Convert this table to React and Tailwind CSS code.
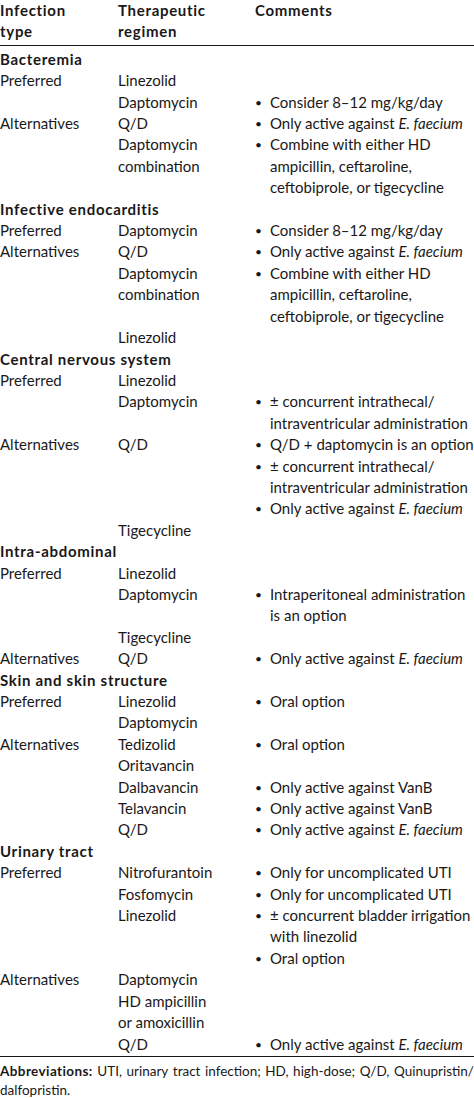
import React from "react";

const EF = () => (
  <>
    Only active against <i>E. faecium</i>
  </>
);

const sections = [
  {
    title: "Bacteremia",
    rows: [
      ["Preferred", ["Linezolid"], []],
      ["", ["Daptomycin"], [["Consider 8–12 mg/kg/day"]]],
      ["Alternatives", ["Q/D"], [[<EF />]]],
      [
        "",
        ["Daptomycin", "combination"],
        [["Combine with either HD", "ampicillin, ceftaroline,", "ceftobiprole, or tigecycline"]],
      ],
    ],
  },
  {
    title: "Infective endocarditis",
    rows: [
      ["Preferred", ["Daptomycin"], [["Consider 8–12 mg/kg/day"]]],
      ["Alternatives", ["Q/D"], [[<EF />]]],
      [
        "",
        ["Daptomycin", "combination"],
        [["Combine with either HD", "ampicillin, ceftaroline,", "ceftobiprole, or tigecycline"]],
      ],
      ["", ["Linezolid"], []],
    ],
  },
  {
    title: "Central nervous system",
    rows: [
      ["Preferred", ["Linezolid"], []],
      ["", ["Daptomycin"], [["± concurrent intrathecal/", "intraventricular administration"]]],
      [
        "Alternatives",
        ["Q/D"],
        [
          ["Q/D + daptomycin is an option"],
          ["± concurrent intrathecal/", "intraventricular administration"],
          [<EF />],
        ],
      ],
      ["", ["Tigecycline"], []],
    ],
  },
  {
    title: "Intra-abdominal",
    rows: [
      ["Preferred", ["Linezolid"], []],
      ["", ["Daptomycin"], [["Intraperitoneal administration", "is an option"]]],
      ["", ["Tigecycline"], []],
      ["Alternatives", ["Q/D"], [[<EF />]]],
    ],
  },
  {
    title: "Skin and skin structure",
    rows: [
      ["Preferred", ["Linezolid", "Daptomycin"], [["Oral option"]]],
      ["Alternatives", ["Tedizolid", "Oritavancin"], [["Oral option"]]],
      ["", ["Dalbavancin"], [["Only active against VanB"]]],
      ["", ["Telavancin"], [["Only active against VanB"]]],
      ["", ["Q/D"], [[<EF />]]],
    ],
  },
  {
    title: "Urinary tract",
    rows: [
      ["Preferred", ["Nitrofurantoin"], [["Only for uncomplicated UTI"]]],
      ["", ["Fosfomycin"], [["Only for uncomplicated UTI"]]],
      [
        "",
        ["Linezolid"],
        [["± concurrent bladder irrigation", "with linezolid"], ["Oral option"]],
      ],
      ["Alternatives", ["Daptomycin"], []],
      ["", ["HD ampicillin", "or amoxicillin"], []],
      ["", ["Q/D"], [[<EF />]]],
    ],
  },
];

function Bullet({ lines }) {
  return (
    <div className="flex">
      <span className="w-[15px] shrink-0 text-[12px]">•</span>
      <div className="whitespace-nowrap">
        {lines.map((l, i) => (
          <div key={i}>{l}</div>
        ))}
      </div>
    </div>
  );
}

export default function App() {
  return (
    <div className="w-[474px] overflow-hidden bg-white text-[#1a1818] font-[Lato,sans-serif] text-[15px] leading-[21.4px]">
      <div className="grid grid-cols-[118px_137px_1fr] pb-[2px] border-b border-[#1a1818] font-bold tracking-[0.7px]">
        <div>
          Infection
          <br />
          type
        </div>
        <div>
          Therapeutic
          <br />
          regimen
        </div>
        <div>Comments</div>
      </div>
      <div className="grid grid-cols-[118px_137px_1fr] pt-[3px] pb-[1px] border-b border-[#1a1818]">
        {sections.map((s) => (
          <React.Fragment key={s.title}>
            <div className="col-span-3 font-bold whitespace-nowrap tracking-[0.7px]">{s.title}</div>
            {s.rows.map((r, i) => (
              <React.Fragment key={i}>
                <div>{r[0]}</div>
                <div className="whitespace-nowrap">
                  {r[1].map((l, j) => (
                    <div key={j}>{l}</div>
                  ))}
                </div>
                <div>
                  {r[2].map((b, j) => (
                    <Bullet key={j} lines={b} />
                  ))}
                </div>
              </React.Fragment>
            ))}
          </React.Fragment>
        ))}
      </div>
      <div className="pt-[5px] text-[13.5px] leading-[19px] w-[474px]">
        <div className="whitespace-nowrap flex justify-between">
          <span className="font-bold tracking-[0.4px]">Abbreviations:</span>
          <span>UTI,</span>
          <span>urinary</span>
          <span>tract</span>
          <span>infection;</span>
          <span>HD,</span>
          <span>high-dose;</span>
          <span>Q/D,</span>
          <span>Quinupristin/</span>
        </div>
        <div>dalfopristin.</div>
      </div>
    </div>
  );
}
